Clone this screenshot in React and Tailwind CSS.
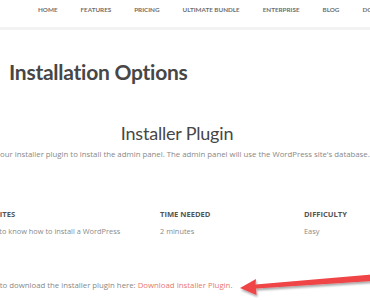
import React from "react";

// Installation page snippet: nav bar, title, installer plugin section with arrow callout

const navItems = ["Home", "Features", "Pricing", "Ultimate Bundle", "Enterprise", "Blog", "Docs"];

const meta = [
  { label: "Prerequisites", value: "You need to know how to install a WordPress", width: "w-[195px]", labelShift: "-ml-[7px]" },
  { label: "Time needed", value: "2 minutes", width: "w-[144px]", labelShift: "" },
  { label: "Difficulty", value: "Easy", width: "w-[144px]", labelShift: "" },
];

export default function App() {
  return (
    <div className="relative w-[370px] h-[300px] overflow-hidden bg-white font-['Open_Sans',sans-serif]">
      {/* Top nav */}
      <nav className="h-[30px] flex items-start pt-[5px] pl-[38px] gap-[23px] whitespace-nowrap border-b-[3px] border-[#f3f3f3]">
        {navItems.map((item) => (
          <span
            key={item}
            className="text-[6.3px] leading-[9px] font-bold uppercase text-[#6f6f6f] font-['Lato',sans-serif]"
          >
            {item}
          </span>
        ))}
      </nav>

      {/* Page title */}
      <h1 className="mt-[28px] ml-[9px] text-[21px] leading-[28px] tracking-[-0.25px] font-bold text-[#474747] font-['Lato',sans-serif]">
        Installation Options
      </h1>

      {/* Installer section */}
      <section className="ml-[-38px] w-[430px]">
        <h2 className="mt-[35px] text-center text-[18px] leading-[24px] tracking-[-0.2px] text-[#474747] font-['Lato',sans-serif]">
          Installer Plugin
        </h2>
        <p className="mt-[3px] text-center text-[7.8px] leading-[12px] text-[#888] whitespace-nowrap">
          Use our installer plugin to install the admin panel. The admin panel will use the WordPress site's database.
        </p>

        <div className="mt-[49px] ml-[3px] flex">
          {meta.map((m) => (
            <div key={m.label} className={`${m.width} shrink-0`}>
              <div className={`${m.labelShift} text-[7.6px] leading-[10px] font-bold uppercase text-[#555] whitespace-nowrap`}>
                {m.label}
              </div>
              <div className="mt-[7px] text-[7.4px] leading-[10px] text-[#8a8a8a] whitespace-nowrap">{m.value}</div>
            </div>
          ))}
        </div>

        <p className="mt-[43px] ml-[19px] text-[7.8px] leading-[12px] text-[#888] whitespace-nowrap">
          Click to download the installer plugin here:{" "}
          <span className="text-[#e8776e]">Download Installer Plugin</span>.
        </p>
      </section>

      {/* Red arrow callout */}
      <svg className="absolute left-[237px] top-[266px]" width="135" height="32" viewBox="0 0 135 32">
        <defs>
          <filter id="sh" x="-10%" y="-50%" width="120%" height="200%">
            <feDropShadow dx="1" dy="2" stdDeviation="1.2" floodColor="#000" floodOpacity="0.35" />
          </filter>
        </defs>
        <path
          d="M3 22 L19 13 L18.5 18.5 L135 8.5 L135 15 L19 22.5 L19.5 29 Z"
          fill="#ef4446"
          filter="url(#sh)"
        />
      </svg>
    </div>
  );
}
